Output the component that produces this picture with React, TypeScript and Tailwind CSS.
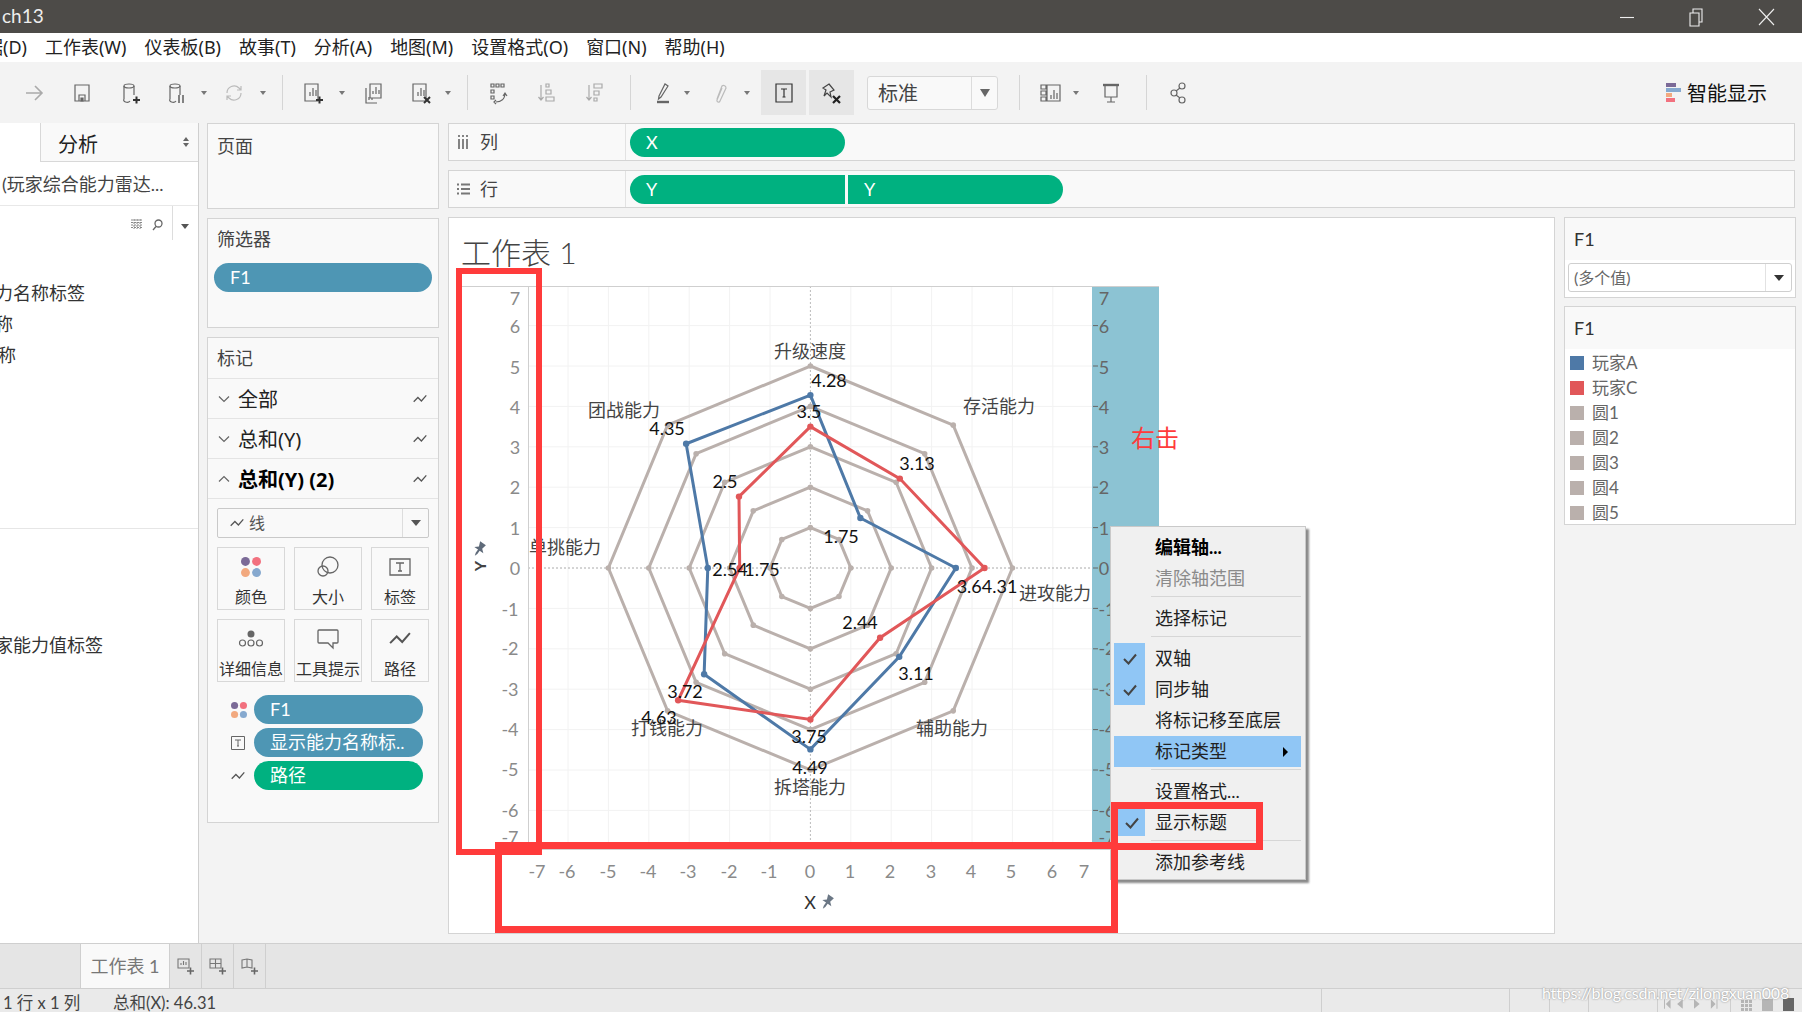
import React from "react";

const cx = 810.4, cy = 569, u = 40.4;
const radar = (vals: number[]) =>
  vals.map((r, i) => {
    const a = (i * Math.PI) / 4;
    return [cx + r * Math.sin(a) * u, cy - r * Math.cos(a) * u];
  });
const A = [4.28, 1.75, 3.6, 3.11, 4.49, 3.72, 2.54, 4.35];
const C = [3.5, 3.13, 4.31, 2.44, 3.75, 4.63, 1.75, 2.5];
const OX = 449, OY = 287;

const labels: [string, number, number][] = [
  ["升级速度", 810, 352], ["存活能力", 999, 407], ["团战能力", 624, 411], ["单挑能力", 565, 548],
  ["进攻能力", 1055, 594], ["辅助能力", 952, 729], ["打钱能力", 667, 729], ["拆塔能力", 810, 788],
];
const nums: [string, number, number][] = [
  ["4.28", 829, 381], ["3.13", 917, 464], ["4.35", 667, 429], ["3.5", 809, 412], ["2.5", 725, 482],
  ["2.54", 730, 570], ["1.75", 762, 570], ["1.75", 841, 537], ["3.64.31", 987, 587], ["2.44", 860, 623],
  ["3.11", 916, 674], ["3.72", 685, 692], ["4.63", 659, 718], ["3.75", 809, 737], ["4.49", 810, 768],
];
const yTicks: [string, number][] = [
  ["7", 299], ["6", 327], ["5", 368], ["4", 408], ["3", 448], ["2", 488], ["1", 529], ["0", 569],
  ["-1", 610], ["-2", 649], ["-3", 690], ["-4", 730], ["-5", 770], ["-6", 811], ["-7", 838],
];
const xTicks: [string, number][] = [
  ["-7", 537], ["-6", 567], ["-5", 608], ["-4", 648], ["-3", 688], ["-2", 729], ["-1", 769], ["0", 810],
  ["1", 850], ["2", 890], ["3", 931], ["4", 971], ["5", 1011], ["6", 1052], ["7", 1084],
];

const PIN = "M-3.500 -7h7l-1 5 3.500 3h-4.500v4l-1 3-1-3v-4h-4.500l3.500-3z";

function Chart() {
  const grid = [-6, -5, -4, -3, -2, -1, 1, 2, 3, 4, 5, 6];
  const octa = [1, 2, 3, 4, 5];
  return (
    <svg viewBox={`${OX} ${OY} 1105 646`} className="absolute left-0 top-0 h-[646px] w-[1105px]">
      <rect x="1092" y="287" width="67" height="563" fill="#8cc3d3" />
      {grid.map((g) => (
        <g key={g}>
          <line x1="528" x2="1092" y1={cy - g * u} y2={cy - g * u} stroke="#f2f2f2" />
          <line y1="287" y2="850" x1={cx + g * u} x2={cx + g * u} stroke="#f2f2f2" />
        </g>
      ))}
      <line x1="528" x2="1092" y1={cy} y2={cy} stroke="#aaa" strokeDasharray="2 2" />
      <line x1={cx} x2={cx} y1="287" y2="850" stroke="#bbb" strokeDasharray="2 2" />
      <line x1="461" x2="1159" y1="287.5" y2="287.5" stroke="#cfcfcf" />
      <line x1="461" x2="1159" y1="850.5" y2="850.5" stroke="#cfcfcf" />
      <line x1="528.5" x2="528.5" y1="287" y2="850" stroke="#cfcfcf" />
      <line x1="1110.5" x2="1110.5" y1="850" y2="881" stroke="#d8d8d8" />
      {yTicks.slice(1, 14).map(([t]) => (
        <line key={t} x1="1093" x2="1098" y1={cy - Number(t) * u} y2={cy - Number(t) * u} stroke="#666" />
      ))}
      {octa.map((r) => (
        <polygon key={r} points={radar(Array(8).fill(r)).map((p) => p.join(",")).join(" ")} fill="none" stroke="#bab0ac" strokeWidth="3" />
      ))}
      {octa.map((r) =>
        radar(Array(8).fill(r)).map((p, i) => <circle key={`${r}-${i}`} cx={p[0]} cy={p[1]} r="2.8" fill="#bab0ac" />)
      )}
      <polygon points={radar(A).map((p) => p.join(",")).join(" ")} fill="none" stroke="#4e79a7" strokeWidth="3" />
      {radar(A).map((p, i) => <circle key={i} cx={p[0]} cy={p[1]} r="3.2" fill="#4e79a7" />)}
      <polygon points={radar(C).map((p) => p.join(",")).join(" ")} fill="none" stroke="#e15759" strokeWidth="3" />
      {radar(C).map((p, i) => <circle key={i} cx={p[0]} cy={p[1]} r="3.2" fill="#e15759" />)}
      <path d={PIN} fill="#5f6b7a" transform="translate(479 550) rotate(35)" />
      <path d={PIN} fill="#6b7785" transform="translate(827 903) rotate(35)" />
    </svg>
  );
}

const Pos = ({ x, y, cls, children }: { x: number; y: number; cls: string; children: React.ReactNode }) => (
  <span className={`absolute -translate-x-1/2 -translate-y-1/2 whitespace-nowrap ${cls}`} style={{ left: x - OX, top: y - OY }}>
    {children}
  </span>
);

const Check = () => (
  <svg width="16" height="14" viewBox="0 0 16 14"><path d="M2 7l4.5 4.5L14 2.500" fill="none" stroke="#444" strokeWidth="2" /></svg>
);
const Sep = ({ cls }: { cls: string }) => <div className={`ml-[37px] h-px bg-[#d6d6d6] ${cls}`} />;

function MenuRow({ text, cls = "", check, checkCls = "", rowCls = "", children }: { text: string; cls?: string; check?: boolean; checkCls?: string; rowCls?: string; children?: React.ReactNode }) {
  return (
    <div className={`flex h-[31px] items-center ${rowCls}`}>
      <div className="flex h-full w-[31px] items-center justify-center">
        {check && <div className={`flex items-center justify-center bg-[#90c6f5] ${checkCls}`}><Check /></div>}
      </div>
      <span className={`ml-[10px] text-[18px] ${cls}`}>{text}</span>
      {children}
    </div>
  );
}

const ContextMenu = () => (
  <div className="absolute left-[661px] top-[240px] h-[354px] w-[196px] border border-[#c9c9c9] bg-[#f0f0f0] pl-[3px] pr-[4px] pt-[5px] text-[#222] shadow-[3px_3px_2px_#8a8a8a]">
    <MenuRow text="编辑轴..." cls="font-bold text-black" />
    <MenuRow text="清除轴范围" cls="text-[#8a8a8a]" />
    <Sep cls="mb-[6px] mt-[2px]" />
    <MenuRow text="选择标记" />
    <Sep cls="mb-[6px] mt-[2px]" />
    <MenuRow text="双轴" check checkCls="h-full w-full" />
    <MenuRow text="同步轴" check checkCls="h-full w-full" />
    <MenuRow text="将标记移至底层" />
    <MenuRow text="标记类型" rowCls="bg-[#90c6f5]">
      <span className="ml-auto mr-[13px] h-0 w-0 border-y-[5px] border-l-[5px] border-y-transparent border-l-black" />
    </MenuRow>
    <Sep cls="mb-[6px] mt-[2px]" />
    <MenuRow text="设置格式..." />
    <MenuRow text="显示标题" check checkCls="ml-[4px] h-[27px] w-[27px]" />
    <Sep cls="mb-[6px] mt-[2px]" />
    <MenuRow text="添加参考线" />
  </div>
);

function Worksheet() {
  return (
    <div className="flex w-[1107px] flex-col border border-[#d4d4d4] bg-white">
      <div className="flex h-[68px] items-start pl-[12px] pt-[14px] text-[30px] font-light leading-[40px] text-[#444]">工作表 1</div>
      <div className="relative flex-1">
        <Chart />
        {yTicks.map(([t, y]) => <Pos key={t} x={520 - t.length * 5} y={y} cls="text-[18px] text-[#8a8a8a]">{t}</Pos>)}
        {xTicks.map(([t, x]) => <Pos key={t} x={x} y={872} cls="text-[18px] text-[#8a8a8a]">{t}</Pos>)}
        {yTicks.map(([t, y]) => (
          <Pos key={t} x={t.length > 1 ? 1107 : 1104} y={y} cls="text-[18px] text-[#666]">{t}</Pos>
        ))}
        {labels.map(([t, x, y]) => <Pos key={t} x={x} y={y} cls="text-[18px] text-[#444]">{t}</Pos>)}
        {nums.map(([t, x, y], i) => <Pos key={i} x={x} y={y} cls="text-[18px] text-[#111]">{t}</Pos>)}
        <Pos x={480} y={567} cls="-rotate-90 text-[16px] font-bold text-[#444]">Y</Pos>
        <Pos x={810} y={903} cls="text-[18px] text-[#333]">X</Pos>
        <Pos x={1155} y={439} cls="text-[24px] text-[#ff3b3b]">右击</Pos>
        <ContextMenu />
        <div className="absolute left-[7px] top-[-18px] h-[587px] w-[86px] border-[6px] border-[#ff3b3b]" />
        <div className="absolute left-[46px] top-[556px] h-[91px] w-[623px] border-[7px] border-[#ff3b3b]" />
        <div className="absolute left-[662px] top-[516px] h-[48px] w-[152px] border-[7px] border-[#ff3b3b]" />
      </div>
    </div>
  );
}

const Ti = ({ c, children }: { c: string; children: React.ReactNode }) => (
  <div className={`flex h-[24px] w-[24px] flex-none items-center justify-center ${c}`}>{children}</div>
);
const Dd = ({ c }: { c: string }) => <div className={`mr-[2px] h-0 w-0 flex-none border-x-[3px] border-t-[4px] border-x-transparent border-t-[#777] ${c}`} />;
const TSep = ({ c }: { c: string }) => <div className={`h-[35px] w-px flex-none bg-[#d5d5d5] ${c}`} />;
const I = ({ children, stroke = "#666" }: { children: React.ReactNode; stroke?: string }) => (
  <svg width="24" height="24" viewBox="0 0 24 24" fill="none" stroke={stroke} strokeWidth="1.2">{children}</svg>
);
const Plus = () => <path d="M15 19h7M18.500 15.500v7" stroke="#333" strokeWidth="2" />;
const XMark = () => <path d="M15 16l6 6M21 16l-6 6" stroke="#333" strokeWidth="2" />;
const Bars = () => <path d="M9 15v-4M12 15V7M15 15v-6" />;

function Toolbar() {
  return (
    <div className="flex h-[61px] items-center bg-[#f3f3f3]">
      <Ti c="ml-[22px]"><I stroke="#aaa"><path d="M4 12h16M13 5l7 7-7 7" strokeWidth="1.600" /></I></Ti>
      <Ti c="ml-[24px]"><I><path d="M5 4h14v16H5zM9 20v-6h6v6" /><path d="M11 17h2v3h-2z" fill="#666" /></I></Ti>
      <Ti c="ml-[24px]"><I><ellipse cx="11" cy="5" rx="5" ry="2" /><path d="M6 5v13a3 2 0 0 0 6 2M16 5v9" /><Plus /></I></Ti>
      <Ti c="ml-[22px]"><I><ellipse cx="11" cy="5" rx="5" ry="2" /><path d="M6 5v13a3 2 0 0 0 6 2M16 5v9" /><path d="M15 14v8M19 14v8" strokeWidth="1.600" /></I></Ti>
      <Dd c="ml-[13px]" />
      <Ti c="ml-[13px]"><I stroke="#bbb"><path d="M5 12a7 7 0 0 1 12-5l2 2M19 12a7 7 0 0 1-12 5l-2-2M19 5v4h-4M5 19v-4h4" /></I></Ti>
      <Dd c="ml-[14px]" />
      <TSep c="ml-[14px]" />
      <Ti c="ml-[18px]"><I><path d="M4 3h13v17H4z" /><Bars /><Plus /></I></Ti>
      <Dd c="ml-[14px]" />
      <Ti c="ml-[14px]"><I><path d="M9 3h11v14H9zM5 7v15h11" /><path d="M12 13v-3M15 13V6M18 13V9M8 19v-3M11 19v-2" /></I></Ti>
      <Ti c="ml-[24px]"><I><path d="M4 3h13v17H4z" /><Bars /><XMark /></I></Ti>
      <Dd c="ml-[12px]" />
      <TSep c="ml-[14px]" />
      <Ti c="ml-[18px]"><I><path d="M5 3h3v3H5zM10 3h3v3h-3zM15 3h3v3h-3zM5 9h3v3H5zM5 15h3v3H5zM10 21c5 0 9-3 9-9M17 15l2-3 2 3M10 19l-2 2 2 2" /></I></Ti>
      <Ti c="ml-[26px]"><I stroke="#aaa"><path d="M5 4v15M2.500 16l2.500 3 2.500-3M10 3h3v3h-3zM10 9h5v4h-5zM10 16h8v4h-8z" /></I></Ti>
      <Ti c="ml-[24px]"><I stroke="#aaa"><path d="M5 4v15M2.500 16l2.500 3 2.500-3M10 3h8v4h-8zM10 10h5v4h-5zM10 17h3v3h-3z" /></I></Ti>
      <TSep c="ml-[22px]" />
      <Ti c="ml-[20px]"><I><path d="M8 15L14 3l3 2-7 11-2.500 2z" /><path d="M6 21h12" strokeWidth="2.400" /></I></Ti>
      <Dd c="ml-[9px]" />
      <Ti c="ml-[16px]"><I stroke="#bbb"><path d="M9 18l5-13a2.500 2.500 0 0 1 4 2l-6 13a1.500 1.500 0 0 1-3-1l5-12" /></I></Ti>
      <Dd c="ml-[12px]" />
      <div className="ml-[9px] flex h-[45px] w-[45px] flex-none items-center justify-center bg-[#e6e6e6]">
        <svg width="20" height="22" viewBox="0 0 20 22" fill="none" stroke="#333" strokeWidth="1.2"><path d="M2 2h16v18H2z" /><path d="M7 7h6M10 7v8M8.500 15h3" /></svg>
      </div>
      <div className="ml-[3px] flex h-[45px] w-[45px] flex-none items-center justify-center bg-[#e6e6e6]">
        <svg width="24" height="24" viewBox="0 0 24 24" fill="none" stroke="#444" strokeWidth="1.200"><path d="M9 3l5 6-4 2 1 5-4-4-3 3 2-6-3-2z" /><path d="M13 15l7 7M20 15l-7 7" stroke="#222" strokeWidth="2.200" /></svg>
      </div>
      <div className="ml-[13px] flex h-[34px] w-[131px] flex-none items-stretch rounded-[3px] border border-[#d8d8d8] bg-[#f9f9f9]">
        <span className="flex flex-1 items-center pl-[10px] text-[20px] text-[#444]">标准</span>
        <span className="flex w-[26px] items-center justify-center border-l border-[#dcdcdc]">
          <span className="h-0 w-0 border-x-[5px] border-t-[8px] border-x-transparent border-t-[#666]" />
        </span>
      </div>
      <TSep c="ml-[21px]" />
      <Ti c="ml-[19px]"><I><path d="M2 4h5v4H2zM2 10h5v4H2zM2 16h5v4H2zM8 4h13v16H8z" /><path d="M12 18v-4M15 18V9M18 18v-6" /></I></Ti>
      <Dd c="ml-[10px]" />
      <Ti c="ml-[18px]"><I><path d="M4 4h16" strokeWidth="2.400" /><path d="M6 5v11h12V5M12 16v5M8 21h8" /></I></Ti>
      <TSep c="ml-[23px]" />
      <Ti c="ml-[19px]"><I><circle cx="16" cy="5" r="3" /><circle cx="8" cy="12" r="3" /><circle cx="16" cy="19" r="3" /><path d="M14 7l-4 3M10 14l4 3" /></I></Ti>
      <div className="ml-auto mr-[35px] flex items-center">
        <div className="mr-[6px] flex flex-col gap-[1px]">
          <div className="h-[4px] w-[10px] bg-[#7b6a97]" />
          <div className="h-[4px] w-[15px] bg-[#86a9cf]" />
          <div className="h-[4px] w-[6px] bg-[#f2a97f]" />
          <div className="h-[4px] w-[9px] bg-[#f2717f]" />
        </div>
        <span className="text-[20px] text-[#111]">智能显示</span>
      </div>
    </div>
  );
}

const Wave = ({ w = 14 }: { w?: number }) => (
  <svg width={w} height={w * 0.7} viewBox="0 0 20 14" fill="none" stroke="#555" strokeWidth="1.800"><path d="M1 11l6-6 5 5 7-8" /></svg>
);
const Dots = ({ s = 8 }: { s?: number }) => (
  <svg width={s * 2 + 2} height={s * 2 + 2} viewBox="0 0 18 18">
    <circle cx="4" cy="4" r="4" fill="#7b6a97" /><circle cx="14" cy="4" r="4" fill="#f2717f" />
    <circle cx="4" cy="14" r="4" fill="#f2a97f" /><circle cx="14" cy="14" r="4" fill="#86a9cf" />
  </svg>
);

const MarkRow = ({ text, up, bold }: { text: string; up?: boolean; bold?: boolean }) => (
  <div className="flex h-[40px] items-center border-b border-[#e4e4e4] pl-[10px] pr-[11px]">
    <svg width="12" height="8" viewBox="0 0 12 8" fill="none" stroke="#666" strokeWidth="1.200" className={up ? "rotate-180" : ""}><path d="M1 1.500l5 5 5-5" /></svg>
    <span className={`ml-[8px] flex-1 pt-[3px] font-['Noto_Sans','Noto_Sans_CJK_SC',sans-serif] text-[20px] text-[#222] ${bold ? "font-bold text-black" : ""}`}>{text}</span>
    <Wave />
  </div>
);
const MarkBtn = ({ c, icon, text }: { c: string; icon: React.ReactNode; text: string }) => (
  <div className={`flex h-[63px] flex-col items-center border border-[#d8d8d8] pt-[7px] ${c}`}>
    <div className="flex h-[24px] items-center">{icon}</div>
    <span className="mt-[8px] whitespace-nowrap text-[16px] leading-[20px] text-[#333]">{text}</span>
  </div>
);
const Pill = ({ c, text }: { c: string; text: string }) => (
  <div className={`flex h-[29px] items-center whitespace-nowrap rounded-full pl-[16px] text-[18px] text-white ${c}`}>{text}</div>
);

function LeftPanel() {
  return (
    <div className="h-full w-[199px] flex-none overflow-hidden border-r border-[#cfcfcf] bg-white text-[18px] text-[#333]">
      <div className="flex h-[39px]">
        <div className="w-[40px]" />
        <div className="flex flex-1 items-center border-b border-l border-[#d8d8d8] bg-[#f9f9f9] pl-[17px] pr-[9px]">
          <span className="flex-1 pt-[3px] text-[20px] text-[#222]">分析</span>
          <span className="flex flex-col gap-[2px]">
            <span className="h-0 w-0 border-x-[3px] border-b-[4px] border-x-transparent border-b-[#666]" />
            <span className="h-0 w-0 border-x-[3px] border-t-[4px] border-x-transparent border-t-[#666]" />
          </span>
        </div>
      </div>
      <div className="flex h-[44px] items-center border-b border-[#e8e8e8] pl-[2px] pt-[2px] whitespace-nowrap text-[#444]">(玩家综合能力雷达...</div>
      <div className="flex h-[34px] items-stretch justify-end">
        <svg className="mt-[13px]" width="12" height="10" viewBox="0 0 12 10" stroke="#888" strokeWidth="1"><path d="M0 1h12M0 3.500h12M0 6h12M0 8.500h12M3 0v10M6 0v10M9 0v10" strokeDasharray="2 1" /></svg>
        <svg className="ml-[9px] mt-[13px]" width="11" height="12" viewBox="0 0 11 12" fill="none" stroke="#666" strokeWidth="1.300"><circle cx="6.500" cy="4.500" r="3.500" /><path d="M4 7.500L1 11" /></svg>
        <div className="ml-[9px] h-full w-px bg-[#ddd]" />
        <span className="ml-[8px] mr-[9px] mt-[18px] h-0 w-0 border-x-[4px] border-t-[5px] border-x-transparent border-t-[#555]" />
      </div>
      <div className="mt-[38px] h-[31px] whitespace-nowrap ml-[-59px] leading-[31px]">显示能力名称标签</div>
      <div className="h-[31px] whitespace-nowrap ml-[-59px] leading-[31px]">能力名称</div>
      <div className="h-[31px] whitespace-nowrap ml-[-56px] leading-[31px]">玩家名称</div>
      <div className="mt-[157px] border-b border-[#e6e6e6]" />
      <div className="mt-[101px] h-[31px] whitespace-nowrap ml-[-23px] leading-[31px]">玩家能力值标签</div>
    </div>
  );
}

function MiddleCol() {
  return (
    <div className="ml-[8px] flex w-[232px] flex-none flex-col gap-[9px] text-[18px] text-[#444]">
      <div className="h-[86px] border border-[#d4d4d4] bg-[#f9f9f9] pl-[9px] pt-[9px]">页面</div>
      <div className="h-[110px] border border-[#d4d4d4] bg-[#f9f9f9] px-[6px] pt-[7px]">
        <div className="pl-[3px]">筛选器</div>
        <div className="mt-[10px] flex h-[29px] items-center rounded-full bg-[#4e96b4] pl-[16px] text-white">F1</div>
      </div>
      <div className="h-[486px] border border-[#d4d4d4] bg-[#f9f9f9]">
        <div className="flex h-[41px] items-center border-b border-[#e4e4e4] pl-[9px]">标记</div>
        <MarkRow text="全部" />
        <MarkRow text="总和(Y)" />
        <MarkRow text="总和(Y) (2)" up bold />
        <div className="px-[9px] pt-[9px]">
          <div className="flex h-[30px] w-[212px] items-center rounded-[2px] border border-[#c9c9c9]">
            <div className="flex flex-1 items-center gap-[5px] pl-[12px] text-[16px] text-[#555]"><Wave />线</div>
            <div className="flex h-full w-[26px] items-center justify-center border-l border-[#ddd]"><span className="h-0 w-0 border-x-[5px] border-t-[6px] border-x-transparent border-t-[#555]" /></div>
          </div>
          <div className="mt-[9px] flex gap-[9px]">
            <MarkBtn c="w-[68px]" icon={<Dots s={9} />} text="颜色" />
            <MarkBtn c="w-[68px]" text="大小" icon={<svg width="24" height="22" viewBox="0 0 24 22" fill="none" stroke="#666" strokeWidth="1.300"><circle cx="14" cy="9" r="8" /><circle cx="7" cy="15" r="5" /></svg>} />
            <MarkBtn c="w-[58px]" text="标签" icon={<svg width="22" height="20" viewBox="0 0 22 20" fill="none" stroke="#666" strokeWidth="1.300"><path d="M1 2h20v16H1z" /><path d="M7 6h8M11 6v8M9 14h4" /></svg>} />
          </div>
          <div className="mt-[9px] flex gap-[9px]">
            <MarkBtn c="w-[68px]" text="详细信息" icon={<svg width="26" height="20" viewBox="0 0 26 20"><circle cx="13" cy="5" r="3.500" fill="#666" /><g fill="none" stroke="#666" strokeWidth="1.200"><circle cx="4.500" cy="14" r="3" /><circle cx="13" cy="14" r="3" /><circle cx="21.500" cy="14" r="3" /></g></svg>} />
            <MarkBtn c="w-[68px]" text="工具提示" icon={<svg width="24" height="22" viewBox="0 0 24 22" fill="none" stroke="#666" strokeWidth="1.300"><path d="M3 2h18a1 1 0 0 1 1 1v11a1 1 0 0 1-1 1h-4v5l-5-5H3a1 1 0 0 1-1-1V3a1 1 0 0 1 1-1z" /></svg>} />
            <MarkBtn c="w-[58px]" text="路径" icon={<Wave w={22} />} />
          </div>
          <div className="mt-[13px] flex flex-col gap-[4px] pl-[14px] pr-[6px]">
            <div className="flex items-center">
              <div className="w-[23px]"><Dots s={7} /></div>
              <Pill c="w-[169px] bg-[#4e96b4]" text="F1" />
            </div>
            <div className="flex items-center">
              <div className="w-[23px]">
                <svg width="14" height="14" viewBox="0 0 14 14" fill="none" stroke="#666" strokeWidth="1"><path d="M.5.500h13v13H.5z" /><path d="M4 4h6M7 4v6M6 10h2" /></svg>
              </div>
              <Pill c="w-[169px] bg-[#4e96b4]" text="显示能力名称标.." />
            </div>
            <div className="flex items-center">
              <div className="w-[23px]"><Wave /></div>
              <Pill c="w-[169px] bg-[#00b180]" text="路径" />
            </div>
          </div>
        </div>
      </div>
    </div>
  );
}

const Shelf = ({ icon, label, children }: { icon: React.ReactNode; label: string; children: React.ReactNode }) => (
  <div className="flex h-[38px] border border-[#d4d4d4] bg-[#f9f9f9]">
    <div className="flex w-[177px] items-center border-r border-[#e2e2e2] pl-[8px] text-[18px] text-[#444]">
      <div className="w-[23px]">{icon}</div>{label}
    </div>
    <div className="flex items-center gap-[3px] pl-[4px]">{children}</div>
  </div>
);
const ShelfPill = ({ text, c }: { text: string; c: string }) => (
  <div className={`flex h-[29px] w-[215px] items-center bg-[#00b180] pl-[16px] text-[18px] text-white ${c}`}>{text}</div>
);

function RightCol() {
  const items: [string, string][] = [
    ["玩家A", "bg-[#4e79a7]"], ["玩家C", "bg-[#e15759]"], ["圆1", "bg-[#bab0ac]"], ["圆2", "bg-[#bab0ac]"],
    ["圆3", "bg-[#bab0ac]"], ["圆4", "bg-[#bab0ac]"], ["圆5", "bg-[#bab0ac]"],
  ];
  return (
    <div className="flex w-[232px] flex-none flex-col gap-[8px]">
      <div className="h-[81px] border border-[#d4d4d4] bg-white">
        <div className="flex h-[42px] items-center bg-[#f9f9f9] pl-[9px] text-[18px] text-[#333]">F1</div>
        <div className="mx-[3px] mt-[3px] flex h-[29px] items-stretch rounded-[3px] border border-[#cfcfcf] bg-white">
          <span className="flex flex-1 items-center pl-[5px] pt-[1px] text-[16px] text-[#666]">(多个值)</span>
          <span className="flex w-[26px] items-center justify-center border-l border-[#e2e2e2]"><span className="h-0 w-0 border-x-[5px] border-t-[6px] border-x-transparent border-t-[#333]" /></span>
        </div>
      </div>
      <div className="h-[219px] border border-[#d4d4d4] bg-white">
        <div className="flex h-[42px] items-center bg-[#f9f9f9] pl-[9px] text-[18px] text-[#333]">F1</div>
        <div className="pl-[5px] pt-[1px]">
          {items.map(([t, c]) => (
            <div key={t} className="flex h-[25px] items-center">
              <div className={`h-[14px] w-[14px] ${c}`} />
              <span className="ml-[8px] text-[17px] text-[#666]">{t}</span>
            </div>
          ))}
        </div>
      </div>
    </div>
  );
}

const TabAdd = ({ children }: { children: React.ReactNode }) => (
  <div className="flex h-full w-[32px] items-center justify-center border-r border-[#cfcfcf]">
    <svg width="18" height="18" viewBox="0 0 18 18" fill="none" stroke="#777" strokeWidth="1.100">{children}<path d="M10 14h7M13.500 10.500v7" stroke="#666" strokeWidth="1.600" /></svg>
  </div>
);

export default function App() {
  return (
    <div className="relative flex h-[1012px] w-[1802px] flex-col overflow-hidden bg-[#f3f3f3] font-['Lato','Noto_Sans_CJK_SC',sans-serif]">
      <div className="flex h-[33px] flex-none items-center bg-[#4d4b48] text-white">
        <span className="ml-[2px] text-[19px] text-[#eee]">ch13</span>
        <svg className="ml-auto" width="155" height="20" viewBox="0 0 155 20" fill="none" stroke="#eee" strokeWidth="1.100">
          <path d="M0 10.500h14" />
          <path d="M70 6h9v13h-9zM73 6V2h9v13h-3" />
          <path d="M139 2l15 16M154 2l-15 16" />
        </svg>
        <div className="w-[27px]" />
      </div>
      <div className="flex h-[29px] flex-none items-center gap-[18px] bg-white pl-0 font-['Noto_Sans','Noto_Sans_CJK_SC',sans-serif] text-[18px] text-[#222]">
        <span className="ml-[-33px] whitespace-nowrap">数据(D)</span>
        <span>工作表(W)</span><span>仪表板(B)</span><span>故事(T)</span><span>分析(A)</span><span>地图(M)</span>
        <span>设置格式(O)</span><span>窗口(N)</span><span>帮助(H)</span>
      </div>
      <Toolbar />
      <div className="flex min-h-0 flex-1">
        <LeftPanel />
        <MiddleCol />
        <div className="ml-[9px] flex w-[1348px] flex-none flex-col">
          <div className="mr-[1px] flex flex-col gap-[9px]">
            <Shelf label="列" icon={<svg width="12" height="14" viewBox="0 0 12 14" stroke="#777" strokeWidth="1.800"><path d="M2 0v2M6 0v2M10 0v2M2 4v10M6 4v10M10 4v10" /></svg>}>
              <ShelfPill text="X" c="rounded-full" />
            </Shelf>
            <Shelf label="行" icon={<svg width="13" height="12" viewBox="0 0 13 12" stroke="#777" strokeWidth="1.800"><path d="M0 1.500h2M4 1.500h9M0 6h2M4 6h9M0 10.500h2M4 10.500h9" /></svg>}>
              <ShelfPill text="Y" c="rounded-l-full" />
              <ShelfPill text="Y" c="rounded-r-full" />
            </Shelf>
          </div>
          <div className="mt-[9px] flex h-[717px] gap-[9px]">
            <Worksheet />
            <RightCol />
          </div>
        </div>
      </div>
      <div className="flex h-[45px] flex-none border-t border-[#cfcfcf] bg-[#e5e5e5]">
        <div className="w-[80px]" />
        <div className="flex w-[90px] items-center justify-center border-x border-[#cfcfcf] bg-[#f9f9f9] text-[18px] text-[#777]">工作表 1</div>
        <TabAdd><path d="M1 2h11v9H1z" /><path d="M4 8V6M6.500 8V4M9 8V5" /></TabAdd>
        <TabAdd><path d="M1 2h11v9H1zM1 6.500h11M6.500 2v9" /></TabAdd>
        <TabAdd><path d="M1 3l5-1 5 1v8l-5-1-5 1zM6 2v8" /></TabAdd>
      </div>
      <div className="flex h-[24px] flex-none items-start overflow-hidden border-t border-[#cfcfcf] bg-[#eaeaea] text-[16.5px] leading-[28px] text-[#444]">
        <span className="ml-[3px] w-[110px] whitespace-pre">1 行 x 1 列</span>
        <span className="whitespace-nowrap">总和(X): 46.31</span>
        <div className="ml-auto flex h-full text-[#aaa]">
          <div className="w-[188px] border-l border-[#cfcfcf]" />
          <div className="w-[40px] border-l border-[#cfcfcf]" />
          <div className="w-[39px] border-l border-[#cfcfcf]" />
          <div className="w-[69px] border-l border-[#cfcfcf]" />
          <div className="flex w-[73px] items-center justify-around border-l border-[#cfcfcf] px-[6px] pt-[6px]">
            <svg width="64" height="10" viewBox="0 0 64 10" fill="#b5b5b5"><path d="M0 0h1v10H0zM7 0v10L2 5zM20 0v10l-6-5zM32 0v10l6-5zM50 0v10l5-5zM56 0h1v10h-1z" /></svg>
          </div>
          <div className="flex w-[72px] items-end gap-[10px] border-l border-[#cfcfcf] pb-[1px] pl-[10px]">
            <svg width="11" height="11" viewBox="0 0 11 11" fill="#b5b5b5"><path d="M0 0h3v3H0zM4 0h3v3H4zM8 0h3v3H8zM0 4h3v3H0zM4 4h3v3H4zM8 4h3v3H8zM0 8h3v3H0zM4 8h3v3H4zM8 8h3v3H8z" /></svg>
            <div className="h-[12px] w-[11px] bg-[#b5b5b5]" />
            <div className="h-[13px] w-[11px] bg-[#666]" />
          </div>
        </div>
      </div>
      <span className="absolute left-[1542px] top-[980px] text-[16px] leading-[26px] tracking-[-0.2px] text-white [text-shadow:0_0_2px_#777]">https://blog.csdn.net/zilongxuan008</span>
    </div>
  );
}
